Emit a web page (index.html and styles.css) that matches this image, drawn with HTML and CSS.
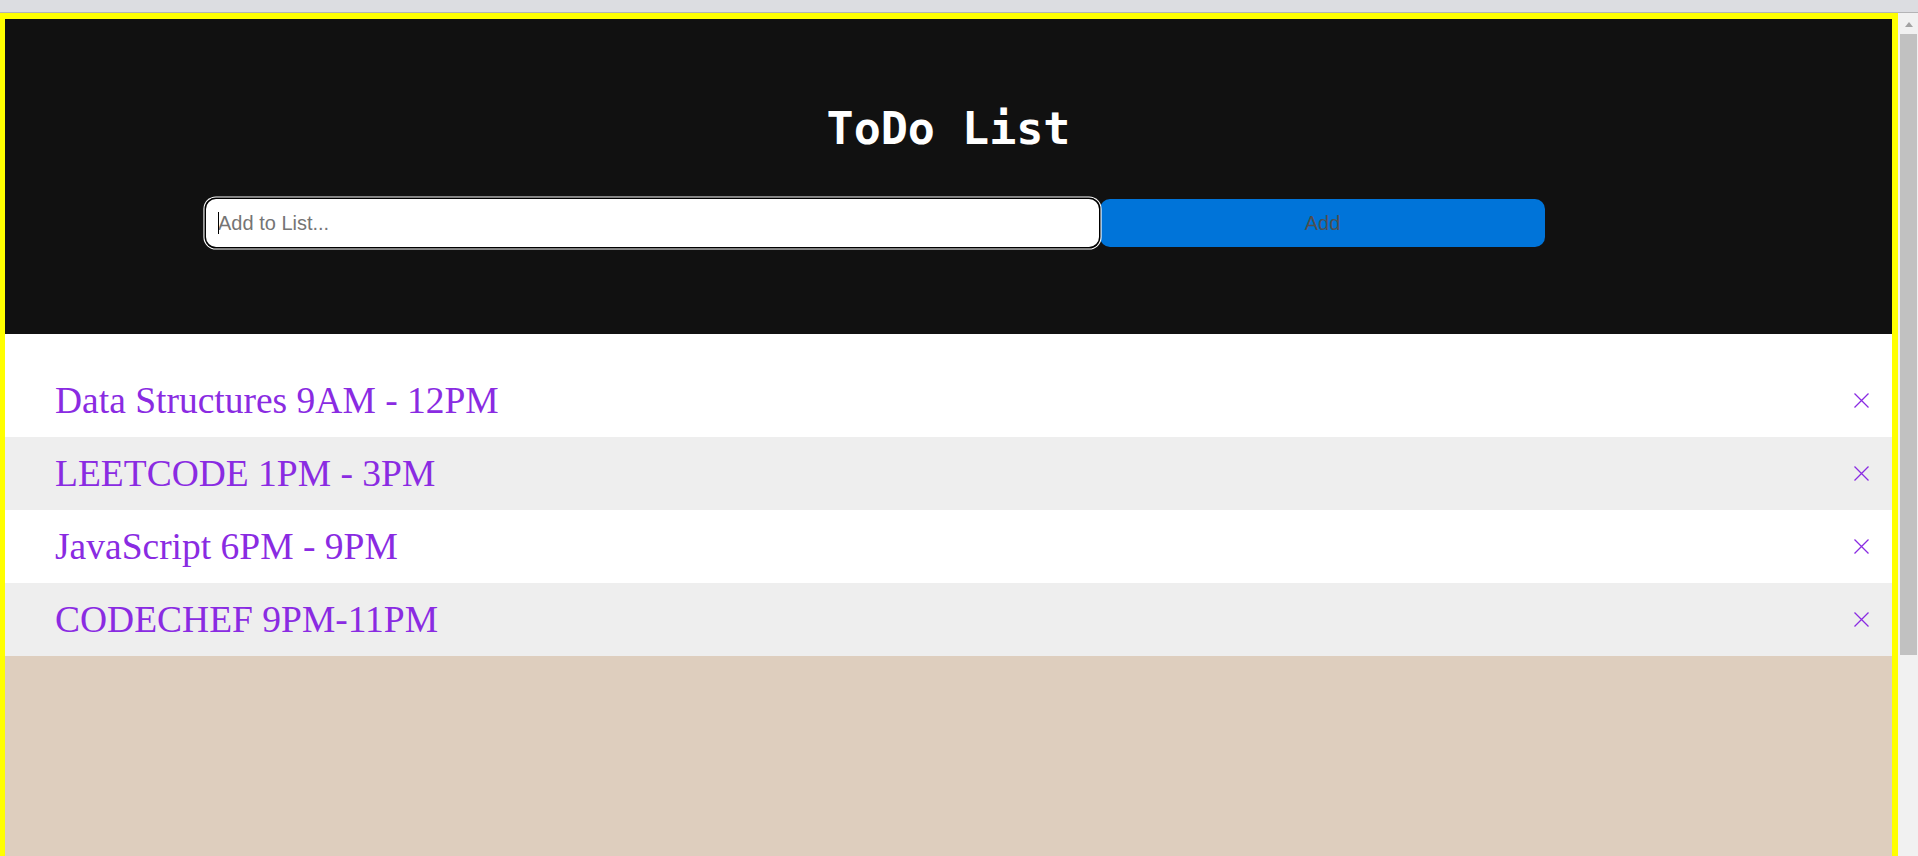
FILE: index.html
```html
<!DOCTYPE html>
<html lang="en">
<head>
<meta charset="utf-8">
<title>ToDo List</title>
<link rel="stylesheet" href="styles.css">
</head>
<body>
<div class="chrome"></div>
<div class="window">
  <main class="page">
    <header class="hero">
      <h1 class="title">ToDo List</h1>
      <form class="add-form">
        <div class="field">
          <input class="add-input" type="text" placeholder="Add to List...">
          <span class="caret"></span>
        </div>
        <button class="add-btn" type="button">Add</button>
      </form>
    </header>
    <ul class="todo-list">
      <li class="todo"><span>Data Structures 9AM - 12PM</span><svg class="close" width="15" height="15" viewBox="0 0 15 15"><path d="M0.5 0.5L14.5 14.5M14.5 0.5L0.5 14.5" stroke="#8a2be2" stroke-width="1.3" fill="none"/></svg></li>
      <li class="todo"><span>LEETCODE 1PM - 3PM</span><svg class="close" width="15" height="15" viewBox="0 0 15 15"><path d="M0.5 0.5L14.5 14.5M14.5 0.5L0.5 14.5" stroke="#8a2be2" stroke-width="1.3" fill="none"/></svg></li>
      <li class="todo"><span>JavaScript 6PM - 9PM</span><svg class="close" width="15" height="15" viewBox="0 0 15 15"><path d="M0.5 0.5L14.5 14.5M14.5 0.5L0.5 14.5" stroke="#8a2be2" stroke-width="1.3" fill="none"/></svg></li>
      <li class="todo"><span>CODECHEF 9PM-11PM</span><svg class="close" width="15" height="15" viewBox="0 0 15 15"><path d="M0.5 0.5L14.5 14.5M14.5 0.5L0.5 14.5" stroke="#8a2be2" stroke-width="1.3" fill="none"/></svg></li>
    </ul>
    <div class="filler"></div>
  </main>
  <div class="scrollbar">
    <div class="sb-button"><span class="sb-arrow"></span></div>
    <div class="sb-thumb"></div>
  </div>
</div>
</body>
</html>
```
FILE: styles.css
```css
* { box-sizing: border-box; }

html, body {
  margin: 0;
  padding: 0;
  height: 856px;
  overflow: hidden;
}

body {
  display: flex;
  flex-direction: column;
  font-family: "Liberation Sans", Arial, sans-serif;
}

.chrome {
  height: 13px;
  flex: none;
  background: #dcdde1;
  border-bottom: 1px solid #b4b4b6;
}

.window {
  flex: 1;
  display: flex;
  min-height: 0;
}

.page {
  flex: 1;
  display: flex;
  flex-direction: column;
  border: 6px solid #ffff00;
  border-left-width: 5px;
  border-bottom: none;
  background: #decebe;
}

.hero {
  background: #111111;
  padding: 84px 0 87px;
}

.title {
  margin: 0;
  text-align: center;
  color: #ffffff;
  font-family: "DejaVu Sans Mono", monospace;
  font-weight: bold;
  font-size: 45px;
  line-height: 52px;
}

.add-form {
  display: flex;
  margin: 44px 0 0 201px;
}

.field {
  position: relative;
  width: 893px;
  height: 48px;
}

.add-input {
  width: 100%;
  height: 100%;
  border: none;
  border-radius: 10px;
  padding: 0 0 0 12px;
  background: #ffffff;
  font-family: "Liberation Sans", Arial, sans-serif;
  font-size: 20px;
  color: #000;
  outline: none;
  box-shadow: 0 0 0 1.5px #000000, 0 0 0 2.6px #ffffff;
}

.add-input::placeholder {
  color: #757575;
}

.caret {
  position: absolute;
  left: 12px;
  top: 13px;
  width: 1px;
  height: 22px;
  background: #000;
}

.add-btn {
  width: 445px;
  height: 48px;
  margin-left: 1px;
  border: none;
  border-radius: 10px;
  background: #0074d9;
  color: #4f4f4f;
  font-family: "Liberation Sans", Arial, sans-serif;
  font-size: 20px;
  padding: 0;
}

.todo-list {
  list-style: none;
  margin: 0;
  padding: 30px 0 0;
  background: #ffffff;
}

.todo {
  display: flex;
  align-items: center;
  justify-content: space-between;
  padding: 15px 23px 15px 50px;
  font-family: "Liberation Serif", "Times New Roman", serif;
  font-size: 37.5px;
  color: #8a2be2;
  background: #ffffff;
}

.todo:nth-child(even) {
  background: #eeeeee;
}

.close {
  flex: none;
  display: block;
}

.filler {
  flex: 1;
}

.scrollbar {
  width: 20px;
  flex: none;
  background: #f1f1f1;
  display: flex;
  flex-direction: column;
  padding: 0 1px 0 2px;
}

.sb-button {
  height: 21px;
  display: flex;
  justify-content: center;
  padding-top: 9px;
}

.sb-arrow {
  width: 0;
  height: 0;
  border-left: 4.5px solid transparent;
  border-right: 4.5px solid transparent;
  border-bottom: 5px solid #a3a3a3;
}

.sb-thumb {
  height: 621px;
  background: #c1c1c1;
}
```
